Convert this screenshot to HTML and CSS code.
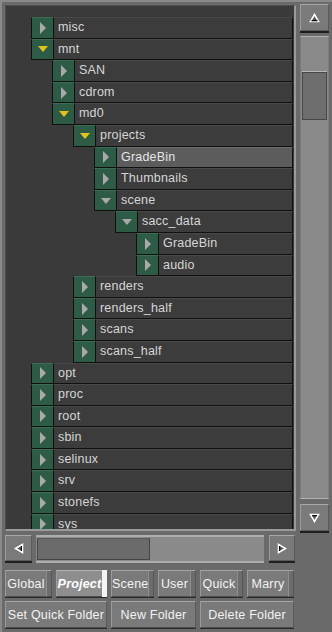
FILE: index.html
```html
<!DOCTYPE html>
<html>
<head>
<meta charset="utf-8">
<link rel="stylesheet" href="styles.css">
</head>
<body>
<div class="app">
  <div class="top">
    <div class="panel">
      <div class="tree">
        <div class="row l0"><span class="tog"><svg class="ar" width="6" height="12"><polygon points="0,0 6,6 0,12" fill="#a9a9a9"/></svg></span><span class="name">misc</span></div>
        <div class="row l0"><span class="tog"><svg class="ad" width="10" height="6"><polygon points="0,0 10,0 5,6" fill="#e2c21c"/></svg></span><span class="name">mnt</span></div>
        <div class="row l1"><span class="tog"><svg class="ar" width="6" height="12"><polygon points="0,0 6,6 0,12" fill="#a9a9a9"/></svg></span><span class="name">SAN</span></div>
        <div class="row l1"><span class="tog"><svg class="ar" width="6" height="12"><polygon points="0,0 6,6 0,12" fill="#a9a9a9"/></svg></span><span class="name">cdrom</span></div>
        <div class="row l1"><span class="tog"><svg class="ad" width="10" height="6"><polygon points="0,0 10,0 5,6" fill="#e2c21c"/></svg></span><span class="name">md0</span></div>
        <div class="row l2"><span class="tog"><svg class="ad" width="10" height="6"><polygon points="0,0 10,0 5,6" fill="#e2c21c"/></svg></span><span class="name">projects</span></div>
        <div class="row l3 sel"><span class="tog"><svg class="ar" width="6" height="12"><polygon points="0,0 6,6 0,12" fill="#a9a9a9"/></svg></span><span class="name">GradeBin</span></div>
        <div class="row l3"><span class="tog"><svg class="ar" width="6" height="12"><polygon points="0,0 6,6 0,12" fill="#a9a9a9"/></svg></span><span class="name">Thumbnails</span></div>
        <div class="row l3"><span class="tog"><svg class="ad" width="10" height="6"><polygon points="0,0 10,0 5,6" fill="#a9a9a9"/></svg></span><span class="name">scene</span></div>
        <div class="row l4"><span class="tog"><svg class="ad" width="10" height="6"><polygon points="0,0 10,0 5,6" fill="#a9a9a9"/></svg></span><span class="name">sacc_data</span></div>
        <div class="row l5"><span class="tog"><svg class="ar" width="6" height="12"><polygon points="0,0 6,6 0,12" fill="#a9a9a9"/></svg></span><span class="name">GradeBin</span></div>
        <div class="row l5"><span class="tog"><svg class="ar" width="6" height="12"><polygon points="0,0 6,6 0,12" fill="#a9a9a9"/></svg></span><span class="name">audio</span></div>
        <div class="row l2"><span class="tog"><svg class="ar" width="6" height="12"><polygon points="0,0 6,6 0,12" fill="#a9a9a9"/></svg></span><span class="name">renders</span></div>
        <div class="row l2"><span class="tog"><svg class="ar" width="6" height="12"><polygon points="0,0 6,6 0,12" fill="#a9a9a9"/></svg></span><span class="name">renders_half</span></div>
        <div class="row l2"><span class="tog"><svg class="ar" width="6" height="12"><polygon points="0,0 6,6 0,12" fill="#a9a9a9"/></svg></span><span class="name">scans</span></div>
        <div class="row l2"><span class="tog"><svg class="ar" width="6" height="12"><polygon points="0,0 6,6 0,12" fill="#a9a9a9"/></svg></span><span class="name">scans_half</span></div>
        <div class="row l0"><span class="tog"><svg class="ar" width="6" height="12"><polygon points="0,0 6,6 0,12" fill="#a9a9a9"/></svg></span><span class="name">opt</span></div>
        <div class="row l0"><span class="tog"><svg class="ar" width="6" height="12"><polygon points="0,0 6,6 0,12" fill="#a9a9a9"/></svg></span><span class="name">proc</span></div>
        <div class="row l0"><span class="tog"><svg class="ar" width="6" height="12"><polygon points="0,0 6,6 0,12" fill="#a9a9a9"/></svg></span><span class="name">root</span></div>
        <div class="row l0"><span class="tog"><svg class="ar" width="6" height="12"><polygon points="0,0 6,6 0,12" fill="#a9a9a9"/></svg></span><span class="name">sbin</span></div>
        <div class="row l0"><span class="tog"><svg class="ar" width="6" height="12"><polygon points="0,0 6,6 0,12" fill="#a9a9a9"/></svg></span><span class="name">selinux</span></div>
        <div class="row l0"><span class="tog"><svg class="ar" width="6" height="12"><polygon points="0,0 6,6 0,12" fill="#a9a9a9"/></svg></span><span class="name">srv</span></div>
        <div class="row l0"><span class="tog"><svg class="ar" width="6" height="12"><polygon points="0,0 6,6 0,12" fill="#a9a9a9"/></svg></span><span class="name">stonefs</span></div>
        <div class="row l0"><span class="tog"><svg class="ar" width="6" height="12"><polygon points="0,0 6,6 0,12" fill="#a9a9a9"/></svg></span><span class="name">sys</span></div>
      </div>
    </div>
    <div class="vs">
      <div class="sbtn vbtn">
        <svg width="11" height="10"><polygon points="5.5,1.5 9.5,8.5 1.5,8.5" fill="#555" stroke="#fff" stroke-width="1.6"/><line x1="2.5" y1="7.6" x2="8.5" y2="7.6" stroke="#111" stroke-width="1.4"/></svg>
      </div>
      <div class="vtrack"><div class="vthumb"></div></div>
      <div class="sbtn vbtn">
        <svg width="11" height="10"><polygon points="1.5,1.5 9.5,1.5 5.5,8.5" fill="#555" stroke="#fff" stroke-width="1.6"/><line x1="3" y1="2.6" x2="8" y2="2.6" stroke="#111" stroke-width="1.2"/></svg>
      </div>
    </div>
  </div>
  <div class="hs">
    <div class="sbtn hbtn lb">
      <svg width="10" height="11"><polygon points="1.5,5.5 8.5,1.5 8.5,9.5" fill="#555" stroke="#fff" stroke-width="1.6"/><line x1="7.4" y1="3" x2="7.4" y2="8" stroke="#111" stroke-width="1.2"/></svg>
    </div>
    <div class="htrack"><div class="hthumb"></div></div>
    <div class="sbtn hbtn rb">
      <svg width="10" height="11"><polygon points="1.5,1.5 8.5,5.5 1.5,9.5" fill="#555" stroke="#fff" stroke-width="1.6"/><line x1="2.6" y1="3" x2="2.6" y2="8" stroke="#111" stroke-width="1.2"/></svg>
    </div>
  </div>
  <div class="brow">
    <div class="tb w-global"><span class="face">Global</span><span class="led"></span></div>
    <div class="tb w-project on"><span class="face">Project</span><span class="led"></span></div>
    <div class="tb w-scene"><span class="face">Scene</span><span class="led"></span></div>
    <div class="tb w-user"><span class="face">User</span><span class="led"></span></div>
    <div class="tb w-quick"><span class="face">Quick</span><span class="led"></span></div>
    <div class="tb w-marry"><span class="face">Marry</span><span class="led"></span></div>
  </div>
  <div class="brow">
    <div class="btn w-sqf">Set Quick Folder</div>
    <div class="btn w-nf">New Folder</div>
    <div class="btn w-df">Delete Folder</div>
  </div>
</div>
</body>
</html>
```

FILE: styles.css
```css
* { box-sizing: border-box; }
html, body { margin: 0; padding: 0; }
body {
  width: 332px;
  height: 632px;
  overflow: hidden;
  background: #6a6a6a;
  font-family: "Liberation Sans", Arial, sans-serif;
}
.app {
  width: 332px;
  height: 632px;
  border-left: 2px solid #8a8a8a;
  border-top: 2px solid #8a8a8a;
  padding: 3px 0 0 3px;
  display: flex;
  flex-direction: column;
}
.top {
  display: flex;
  height: 526px;
}
.panel {
  width: 291px;
  height: 526px;
  background: #3a3a3a;
  border-top: 1px solid #4e4e4e;
  border-left: 1px solid #4e4e4e;
  border-right: 2px solid #9a9a9a;
  border-bottom: 2px solid #9a9a9a;
  overflow: hidden;
  padding: 11px 1px 0 0;
}
.tree { display: flex; flex-direction: column; }
.row {
  display: flex;
  height: 21.6px;
  flex: none;
}
.l0 { padding-left: 25px; }
.l1 { padding-left: 46px; }
.l2 { padding-left: 67px; }
.l3 { padding-left: 88px; }
.l4 { padding-left: 109px; }
.l5 { padding-left: 130px; }
.tog {
  width: 22px;
  flex: none;
  background: #2e5b46;
  border-left: 1px solid #101010;
  border-bottom: 1px solid #101010;
  border-top: 1px solid #3b6c55;
  display: flex;
  align-items: center;
  justify-content: center;
}
.ar { display: block; margin-left: 1px; }
.ad { display: block; margin-left: 0; }
.name {
  flex: 1;
  background: #3c3c3c;
  border-left: 1px solid #101010;
  border-right: 1px solid #101010;
  border-bottom: 1px solid #101010;
  border-top: 1px solid #484848;
  color: #d6d6d6;
  font-size: 12.5px;
  line-height: 19px;
  padding-left: 4px;
  white-space: nowrap;
  letter-spacing: 0.2px;
}
.sel .name {
  background: #5c5c5c;
  border-top-color: #6c6c6c;
  color: #e6e6e6;
}
/* vertical scrollbar */
.vs {
  width: 29px;
  margin-left: 4px;
  margin-top: -1px;
  height: 527px;
  display: flex;
  flex-direction: column;
}
.sbtn {
  background: #7a7a7a;
  border-top: 1px solid #a8a8a8;
  border-left: 1px solid #9c9c9c;
  border-right: 1px solid #5a5a5a;
  border-bottom: 1px solid #5a5a5a;
  display: flex;
  align-items: center;
  justify-content: center;
  flex: none;
}
.vbtn {
  height: 27px;
  box-shadow: 0 2px 0 #1e1e1e;
}
.vtrack {
  flex: 1;
  margin: 5px 0 5px 0;
  background: #8a8a8a;
  border-top: 1px solid #b2b2b2;
  border-bottom: 1px solid #b2b2b2;
  border-left: 1px solid #7c7c7c;
  border-right: 1px solid #7c7c7c;
  padding: 35px 1px 0 1px;
}
.vthumb {
  height: 48px;
  background: #6e6e6e;
  border: 1px solid #474747;
  box-shadow: 0 -1px 0 #b8b8b8;
}
/* horizontal scrollbar */
.hs {
  display: flex;
  height: 28px;
  margin-top: 4px;
  width: 291px;
}
.hbtn {
  height: 26px;
  box-shadow: 0 2px 0 #1e1e1e;
}
.lb { width: 27px; }
.rb { width: 26px; }
.htrack {
  width: 228px;
  margin: 0 5px 0 4px;
  background: #8a8a8a;
  border-top: 2px solid #aeaeae;
  border-bottom: 2px solid #aeaeae;
  padding: 1px 0 1px 1px;
  display: flex;
}
.hthumb {
  width: 113px;
  background: #6b6b6b;
  border: 1px solid #454545;
  border-top-color: #5a5a5a;
}
/* buttons */
.brow {
  display: flex;
  gap: 4px;
  height: 27px;
  margin-top: 7px;
}
.brow + .brow { margin-top: 4px; }
.tb, .btn {
  height: 27px;
  display: flex;
  box-shadow: 0 1px 0 #2a2a2a;
}
.tb .face, .btn {
  background: #7a7a7a;
  border-top: 1px solid #a6a6a6;
  border-left: 1px solid #9a9a9a;
  border-bottom: 1px solid #4e4e4e;
  color: #f2f2f2;
  font-size: 12.5px;
  display: flex;
  align-items: center;
  justify-content: center;
  white-space: nowrap;
  letter-spacing: 0.2px;
}
.tb .face { flex: 1; }
.btn { border-right: 1px solid #5a5a5a; }
.tb .led {
  width: 6px;
  background: #6c6c6c;
  border-top: 1px solid #a6a6a6;
  border-left: 1px solid #8e8e8e;
  border-right: 1px solid #555;
  border-bottom: 1px solid #4e4e4e;
}
.tb.on .face {
  background: #8e8e8e;
  font-style: italic;
  font-weight: bold;
  color: #ffffff;
  border-top-color: #b4b4b4;
}
.tb.on .led {
  background: #f4f4f4;
  border-color: #f4f4f4;
  width: 5px;
}
.w-global { width: 47px; }
.w-project { width: 51px; }
.w-scene { width: 43px; }
.w-user { width: 38px; }
.w-quick { width: 43px; }
.w-marry { width: 47px; }
.w-sqf { width: 102px; }
.w-nf { width: 85px; }
.w-df { width: 94px; }
```
